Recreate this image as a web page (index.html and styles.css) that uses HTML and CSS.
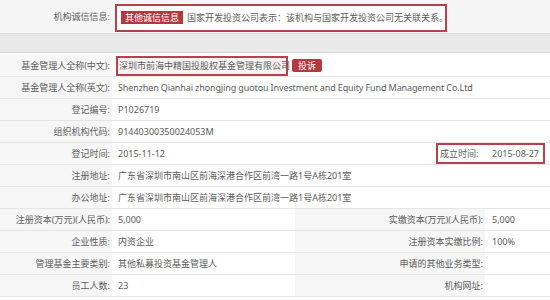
FILE: index.html
```html
<!DOCTYPE html>
<html>
<head>
<meta charset="utf-8">
<link rel="stylesheet" href="styles.css">
</head>
<body>
<div class="table">
  <div class="row top">
    <div class="label">机构诚信信息:</div>
    <div class="value">
      <div class="redbox wide">
        <span class="badge">其他诚信信息</span>
        <span class="note">国家开发投资公司表示：该机构与国家开发投资公司无关联关系。</span>
      </div>
    </div>
  </div>
  <div class="band"></div>
  <div class="row">
    <div class="label">基金管理人全称(中文):</div>
    <div class="value">
      <span class="redbox name">深圳市前海中精国投股权基金管理有限公司</span>
      <span class="badge small">投诉</span>
    </div>
  </div>
  <div class="row">
    <div class="label">基金管理人全称(英文):</div>
    <div class="value english">Shenzhen Qianhai zhongjing guotou Investment and Equity Fund Management Co.Ltd</div>
  </div>
  <div class="row">
    <div class="label">登记编号:</div>
    <div class="value">P1026719</div>
  </div>
  <div class="row">
    <div class="label">组织机构代码:</div>
    <div class="value">91440300350024053M</div>
  </div>
  <div class="row">
    <div class="label">登记时间:</div>
    <div class="value">2015-11-12</div>
    <div class="redbox est"><span>成立时间:</span><span>2015-08-27</span></div>
  </div>
  <div class="row">
    <div class="label">注册地址:</div>
    <div class="value">广东省深圳市南山区前海深港合作区前湾一路1号A栋201室</div>
  </div>
  <div class="row">
    <div class="label">办公地址:</div>
    <div class="value">广东省深圳市南山区前海深港合作区前湾一路1号A栋201室</div>
  </div>
  <div class="row">
    <div class="label">注册资本(万元)(人民币):</div>
    <div class="value">5,000</div>
    <div class="rlabel">实缴资本(万元)(人民币):</div>
    <div class="rvalue">5,000</div>
  </div>
  <div class="row">
    <div class="label">企业性质:</div>
    <div class="value">内资企业</div>
    <div class="rlabel">注册资本实缴比例:</div>
    <div class="rvalue">100%</div>
  </div>
  <div class="row">
    <div class="label">管理基金主要类别:</div>
    <div class="value">其他私募投资基金管理人</div>
    <div class="rlabel">申请的其他业务类型:</div>
    <div class="rvalue"></div>
  </div>
  <div class="row">
    <div class="label">员工人数:</div>
    <div class="value">23</div>
    <div class="rlabel">机构网址:</div>
    <div class="rvalue"></div>
  </div>
</div>
</body>
</html>
```

FILE: styles.css
```css
html, body {
  margin: 0;
  padding: 0;
  background: #ffffff;
}
body {
  width: 550px;
  height: 300px;
  overflow: hidden;
  font-family: "Noto Sans", "Noto Sans CJK SC", sans-serif;
  font-size: 9px;
  color: #5c5c5c;
}
.table {
  display: flex;
  flex-direction: column;
}
.row {
  display: flex;
  align-items: center;
  height: 21px;
  border-bottom: 1px solid #e6e6e6;
  background: linear-gradient(to right, #f6f6f6 0, #f6f6f6 112px, #ffffff 112px);
}
.row.top {
  height: 33px;
  background: #f5f5f5;
  border-bottom: 1px solid #dadada;
}
.band {
  height: 18px;
  background: #e9e9e9;
  border-bottom: 1px solid #d8d8d8;
  margin-bottom: 2px;
}
.label {
  width: 110px;
  flex: none;
  text-align: right;
  color: #606060;
  white-space: nowrap;
}
.value {
  flex: 1;
  padding-left: 8px;
  white-space: nowrap;
  display: flex;
  align-items: center;
}
.value.english {
  letter-spacing: -0.12px;
}
.redbox {
  border: 2px solid #b8414c;
  box-sizing: border-box;
}
.redbox.wide {
  display: flex;
  align-items: center;
  margin-left: -3px;
  margin-top: 2px;
  width: 332px;
  height: 28px;
  padding-left: 4px;
  background: #ffffff;
}
.badge {
  background: #b5383f;
  color: #fff;
  padding: 1px 4px;
  margin-right: 4px;
  line-height: 11px;
}
.note {
  color: #5c5c5c;
}
.redbox.name {
  margin-left: -2px;
  height: 20px;
  width: 172px;
  display: flex;
  align-items: center;
  padding-left: 1px;
  background: #fbf3f3;
}
.badge.small {
  margin-left: 4px;
  padding: 1px 6px;
  border-radius: 2px;
}
.redbox.est {
  flex: none;
  width: 109px;
  height: 21px;
  margin-right: 5px;
  display: flex;
  align-items: center;
  justify-content: space-between;
  padding: 0 4px 0 2px;
  background: #fff;
}
.rlabel {
  width: 190px;
  flex: none;
  text-align: right;
  background: #f6f6f6;
  height: 100%;
  display: flex;
  align-items: center;
  justify-content: flex-end;
  padding-right: 2px;
  box-sizing: border-box;
}
.rvalue {
  width: 58px;
  flex: none;
  padding-left: 7px;
}
```
